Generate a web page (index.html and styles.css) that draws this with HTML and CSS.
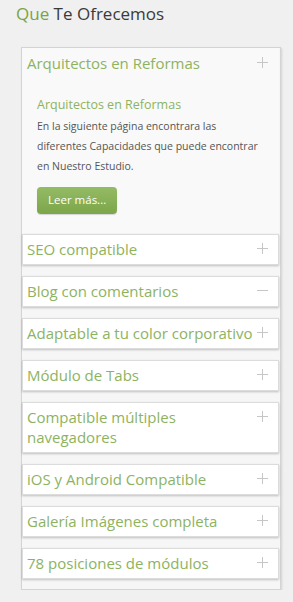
FILE: index.html
```html
<!DOCTYPE html>
<html lang="es">

<head>
    <meta charset="UTF-8">
    <meta name="viewport" content="width=device-width, initial-scale=1.0">
    <title>Que Te Ofrecemos</title>
    <link rel="stylesheet" href="styles.css">
</head>

<body>

    <h2 class="section-title"><span class="accent">Que</span> Te Ofrecemos</h2>

    <div class="accordion">
        <div class="acc-item open">
            <div class="acc-head">
                <span class="acc-label">Arquitectos en Reformas</span>
                <span class="acc-icon plus"></span>
            </div>
            <div class="acc-body">
                <h3>Arquitectos en Reformas</h3>
                <p>En la siguiente página encontrara las diferentes Capacidades que puede encontrar en Nuestro Estudio.</p>
                <a class="btn" href="#">Leer más...</a>
            </div>
        </div>

        <div class="acc-item">
            <div class="acc-head">
                <span class="acc-label">SEO compatible</span>
                <span class="acc-icon plus"></span>
            </div>
        </div>

        <div class="acc-item">
            <div class="acc-head">
                <span class="acc-label">Blog con comentarios</span>
                <span class="acc-icon minus"></span>
            </div>
        </div>

        <div class="acc-item">
            <div class="acc-head">
                <span class="acc-label">Adaptable a tu color corporativo</span>
                <span class="acc-icon plus"></span>
            </div>
        </div>

        <div class="acc-item">
            <div class="acc-head">
                <span class="acc-label">Módulo de Tabs</span>
                <span class="acc-icon plus"></span>
            </div>
        </div>

        <div class="acc-item">
            <div class="acc-head">
                <span class="acc-label">Compatible múltiples navegadores</span>
                <span class="acc-icon plus"></span>
            </div>
        </div>

        <div class="acc-item">
            <div class="acc-head">
                <span class="acc-label">iOS y Android Compatible</span>
                <span class="acc-icon plus"></span>
            </div>
        </div>

        <div class="acc-item">
            <div class="acc-head">
                <span class="acc-label">Galería Imágenes completa</span>
                <span class="acc-icon plus"></span>
            </div>
        </div>

        <div class="acc-item">
            <div class="acc-head">
                <span class="acc-label">78 posiciones de módulos</span>
                <span class="acc-icon plus"></span>
            </div>
        </div>
    </div>

</body>

</html>
```

FILE: styles.css
```css
body {
    font-family: "Open Sans", "Noto Sans", sans-serif;
    background-color: #f0f0f0;
    margin: 0;
    padding: 0;
}

.section-title {
    margin: 0;
    padding: 3px 0 0 16px;
    height: 43px;
    box-sizing: border-box;
    font-size: 17px;
    font-weight: normal;
    line-height: 22px;
    color: #3a3a3a;
}

.section-title .accent {
    color: #7ba344;
}

.accordion {
    margin-left: 21px;
    margin-top: 4px;
    width: 260px;
    box-sizing: border-box;
    background: #f6f6f6;
    border: 1px solid #d4d4d4;
    padding: 0 1px 10px 0;
    box-shadow: 1px 1px 2px rgba(0, 0, 0, 0.12);
}

.acc-item {
    background: #fff;
    border: 1px solid #dcdcdc;
    box-shadow: 0 1px 2px rgba(0, 0, 0, 0.22);
    margin-bottom: 11px;
}

.acc-item:last-child {
    margin-bottom: 0;
}

.acc-item.open {
    background: #f9f9f9;
    border-color: #f9f9f9;
    box-shadow: none;
    margin-bottom: 1px;
}

.acc-head {
    display: flex;
    align-items: flex-start;
    padding: 4px 0 5px 4px;
    font-size: 15px;
    line-height: 20px;
    color: #8db35f;
}

.acc-label {
    flex: 1;
}

.acc-icon {
    position: relative;
    width: 11px;
    height: 20px;
    margin: 0 10px 0 4px;
    flex-shrink: 0;
}

.acc-icon::before,
.acc-icon::after {
    content: "";
    position: absolute;
    background: #c6c6c6;
}

.acc-icon::before {
    left: 0;
    top: 9px;
    width: 11px;
    height: 1px;
}

.acc-icon.plus::after {
    left: 5px;
    top: 4px;
    width: 1px;
    height: 11px;
}

.acc-body {
    padding: 17px 14px 18px 14px;
}

.acc-body h3 {
    margin: 0;
    font-size: 12.5px;
    font-weight: normal;
    line-height: 20px;
    color: #8db35f;
}

.acc-body p {
    margin: 1px 0 0;
    font-size: 10.5px;
    line-height: 20px;
    color: #555;
}

.btn {
    display: inline-block;
    margin-top: 11px;
    padding: 0 11px;
    height: 27px;
    line-height: 26px;
    font-size: 11.5px;
    color: #fff;
    text-decoration: none;
    border-radius: 4px;
    background: linear-gradient(#94bb65, #7ca64a);
    box-shadow: 0 1px 1px rgba(0, 0, 0, 0.15);
}
```
